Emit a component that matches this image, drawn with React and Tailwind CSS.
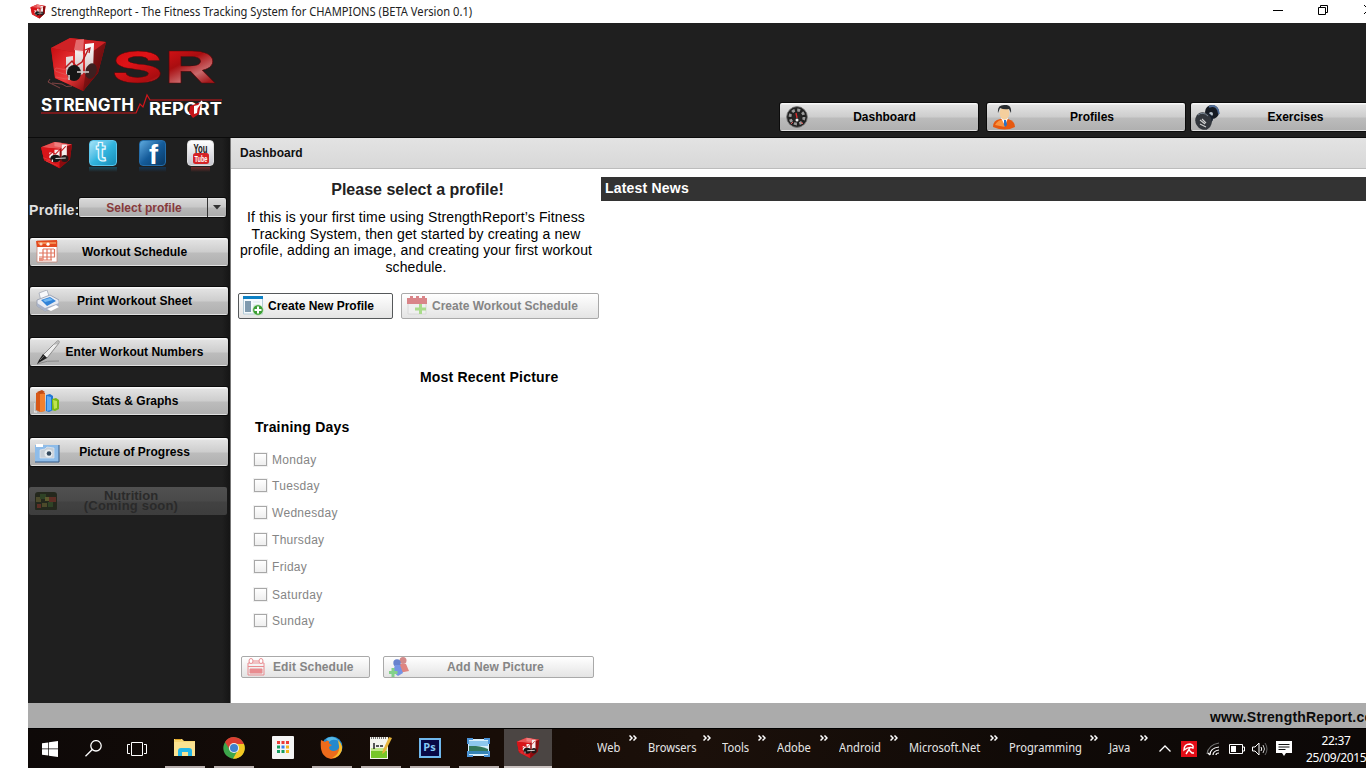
import React from "react";

const glossy =
  "bg-[linear-gradient(180deg,#f8f8f8_0px,#f8f8f8_1px,#e2e2e2_2px,#cdcdcd_14px,#bcbcbc_15px,#b0b0b0_27px,#e0e0e0_27px)] shadow-[0_0_0_1px_#0b0b0b]";

function Cube({ className }) {
  return (
    <svg viewBox="0 0 32 32" preserveAspectRatio="none" className={className}>
      <path d="M1 7 L14 1 L31 4 L29 21 L19 31 L4 22 Z" fill="#c50d12" />
      <path d="M1 7 L14 1 L31 4 L19 9 Z" fill="#e85556" />
      <path d="M1 7 L19 9 L19 31 L4 22 Z" fill="#d91419" />
      <path d="M19 9 L31 4 L29 21 L19 31 Z" fill="#8c0b0e" />
      <path d="M9 13h4v9l-4-3z M14 10h5v13h-5z M21 4h5v14l-5 4z" fill="#f7eeee" />
      <path d="M14 1 L21 2 L20 7 L14 6z" fill="#f49a9a" opacity=".6" />
      <path d="M8 17l4-4 3 2 4-5 2 1 4-5" fill="none" stroke="#c4161b" strokeWidth="1" />
      <ellipse cx="15" cy="20" rx="5" ry="4.3" fill="#151515" />
      <ellipse cx="24" cy="20" rx="3.6" ry="4" fill="#251a1a" />
      <path d="M12 24v-3M15 20l10-.6" stroke="#d8d8d8" strokeWidth="1.3" />
      <path d="M3 19l7 3-4 1 11 5" fill="none" stroke="#ee6768" strokeWidth=".6" opacity=".6" />
    </svg>
  );
}

function Logo() {
  return (
    <svg width="190" height="88" viewBox="38 34 190 88" className="block">
      <defs>
        <linearGradient id="cubeFront" x1="0" y1="0" x2="1" y2="1">
          <stop offset="0" stopColor="#c80c10" /><stop offset=".55" stopColor="#f03c3d" /><stop offset="1" stopColor="#7d0709" />
        </linearGradient>
        <linearGradient id="cubeSide" x1="0" y1="0" x2="1" y2="1">
          <stop offset="0" stopColor="#a01c1e" /><stop offset="1" stopColor="#4f0304" />
        </linearGradient>
        <linearGradient id="bars" x1="0" y1="0" x2="0" y2="1">
          <stop offset="0" stopColor="#fff" /><stop offset="1" stopColor="#c9b4b4" />
        </linearGradient>
        <linearGradient id="sr" x1="0" y1="0" x2="1" y2="1">
          <stop offset="0" stopColor="#c20a0e" /><stop offset=".3" stopColor="#e01317" /><stop offset=".55" stopColor="#a90d10" /><stop offset=".72" stopColor="#c9696b" /><stop offset=".85" stopColor="#a3191c" /><stop offset="1" stopColor="#d31a1e" />
        </linearGradient>
      </defs>
      <path d="M51 48L70 38l36 4-8 31-15 18-28-13z" fill="#b80d11" />
      <path d="M51 48L70 38l36 4-18 13z" fill="#cf2225" />
      <path d="M51 48l37 7-4 36-29-13z" fill="url(#cubeFront)" />
      <path d="M88 55l18-13-8 31-15 18z" fill="url(#cubeSide)" />
      <path d="M66 57l7-1v21l-7-3z M75 50l8 1v23l-8 3z M85 44l9-1-1 28-8 3z" fill="url(#bars)" />
      <path d="M76 40l8-1-1 14-9-3z" fill="#f9b2b2" opacity=".5" />
      <path d="M65 68l7-7 4 5 6-4 7-14" fill="none" stroke="#b41a1e" strokeWidth="1.5" />
      <path d="M85 50l5-2-1 5" fill="none" stroke="#b41a1e" strokeWidth="1.3" />
      <ellipse cx="74" cy="73" rx="7" ry="8" fill="#161616" />
      <ellipse cx="91" cy="71" rx="5.5" ry="8" transform="rotate(18 91 71)" fill="#3c2020" />
      <path d="M69 80v-5M77 72l12 0" stroke="#d8d0d0" strokeWidth="1.6" />
      <path d="M67 70l-11-2q-3 3 2 4l9 3q3 3-1 4l-10-2M52 83l10 1q4 4 10 2M50 79l-2 3 12 6" fill="none" stroke="#e06768" strokeWidth="1" opacity=".5" />
      <text transform="translate(111 83) scale(1.73 1)" fontSize="44" fontWeight="700" fontFamily="Inter, 'Liberation Sans', sans-serif" fill="url(#sr)" stroke="#5d0507" strokeWidth=".4" textLength="61" lengthAdjust="spacingAndGlyphs">SR</text>
      <path d="M41 113h95l4-9 3 3 4-12 3 5h72" fill="none" stroke="#d0161b" strokeWidth="1.2" />
      <g fontFamily="Inter, 'Liberation Sans', sans-serif" fontWeight="700" fill="#fff">
        <text x="41" y="111" fontSize="17" textLength="93" lengthAdjust="spacingAndGlyphs">STRENGTH</text>
        <text x="149" y="115" fontSize="17" textLength="73" lengthAdjust="spacingAndGlyphs">REPORT</text>
      </g>
      <path d="M190 106l11-4-2 12-6 4-4-5z" fill="#c51418" />
      <path d="M194 106l4-1-1 8-3 1z" fill="#fff" />
      <path d="M197 108l5-7" stroke="#fff" strokeWidth="1.5" />
    </svg>
  );
}

const icons = {
  gauge: (
    <svg width="22" height="22" viewBox="0 0 22 22">
      <circle cx="11" cy="11" r="10.4" fill="#202020" stroke="#777" strokeWidth=".8" />
      <circle cx="11" cy="11" r="7" fill="none" stroke="#999" strokeWidth="2.8" strokeDasharray="3 2.5" />
      <circle cx="11" cy="11" r="4.7" fill="#252525" />
      <path d="M10 7l1 5" stroke="#e12c2c" strokeWidth="1.3" />
      <circle cx="11" cy="14" r="1.5" fill="#eee" />
      <path d="M5 18l2-2M17 18l-2-2" stroke="#d55" />
    </svg>
  ),
  user: (
    <svg width="22" height="25" viewBox="0 0 22 25">
      <path d="M0 22q0-7 7-8h8q7 2 7 8-10 5-22 0z" fill="#e65910" />
      <path d="M2 20q3-5 7-5l3 7z" fill="#fa9440" />
      <path d="M8 13h7l-3 8z" fill="#fff" />
      <path d="M11 15h2l1 5-2 2-1-2z" fill="#2773c9" />
      <ellipse cx="11.5" cy="8" rx="4.8" ry="6.7" fill="#f5cf9d" />
      <path d="M5 8Q4 0 11 0q8-1 7 8l-2-4q-5 1-9-1z" fill="#292d30" />
    </svg>
  ),
  dumbbell: (
    <svg width="25" height="25" viewBox="0 0 25 25">
      <circle cx="17" cy="7" r="7" fill="#151a22" />
      <path d="M14 2q6-3 9 3l1 4" fill="none" stroke="#4f6b95" strokeWidth="1.7" />
      <circle cx="16" cy="9" r="2" fill="#b8c2cc" />
      <path d="M12 8q6 1 6 7l-7 10z" fill="#172130" />
      <ellipse cx="8.5" cy="16" rx="8" ry="9" transform="rotate(-28 8.5 16)" fill="#33373d" />
      <path d="M3 10q5-4 10 1" fill="none" stroke="#7a8795" />
      <path d="M5 15l5 4M7 14l4 4M5 19l6 3" stroke="#d0d0d0" strokeWidth="1.1" />
    </svg>
  ),
  calendar: (
    <svg width="22" height="24" viewBox="0 0 22 24">
      <path d="M1 1h20v21H1z" fill="#fff" stroke="#c98878" strokeWidth=".8" />
      <path d="M0 1l21-1v7H1z" fill="#e34a1e" />
      <path d="M2 2h18v2H2z" fill="#f38b52" />
      <circle cx="5" cy="4" r="1.6" fill="#fbd6c0" /><circle cx="12" cy="4.2" r="1.6" fill="#fff" />
      <path d="M7 9h11M3 13h16M3 17h16M3 20h13M7 9v11M11 9v11M15 9v11M18.5 9v8" stroke="#e07660" strokeWidth="1.2" fill="none" />
      <path d="M3 18h4v3H3z" fill="#e7917f" />
    </svg>
  ),
  printer: (
    <svg width="23" height="22" viewBox="0 0 23 22">
      <path d="M3 3l8-3 3 9-9 2z" fill="#f7f8fb" stroke="#a2a8b5" strokeWidth=".8" />
      <path d="M1 10L14 5l9 5v6L9 21l-8-5z" fill="#e8ebf2" stroke="#8f98ab" strokeWidth=".8" />
      <path d="M5 10l9-3 6 4-9 5z" fill="#3183d8" />
      <path d="M7 10l7-2 3 2-8 2z" fill="#73b8f2" />
      <path d="M1 13l8 5 14-5v3L9 21l-8-5z" fill="#a9b3c7" />
      <path d="M11 19l9-4 3 2-8 4z" fill="#fff" />
    </svg>
  ),
  pen: (
    <svg width="25" height="25" viewBox="0 0 25 25">
      <path d="M2 24Q12 20 24 21" fill="none" stroke="#888" strokeWidth="1" />
      <path d="M8 15L22 1q3-1 2 2L12 18z" fill="#eee" stroke="#777" strokeWidth=".8" />
      <path d="M18 5l4-4q3 0 1 3z" fill="#bababa" />
      <path d="M8 14l4 4-7 4-3 2 2-4z" fill="#202020" />
      <path d="M5 20l4-4" stroke="#666" />
    </svg>
  ),
  bars: (
    <svg width="25" height="23" viewBox="0 0 25 23">
      <path d="M0 13v9h3" fill="none" stroke="#f3f3f3" />
      <path d="M2 3l5-2 4 2v18l-5 1-4-2z" fill="#d75818" /><path d="M6 4h5v17l-5 1z" fill="#f3812e" /><path d="M3 2l5-2 3 2-5 2z" fill="#c14d15" />
      <path d="M12 5l4-1 3 2v14l-4 2-3-1z" fill="#2177d4" /><path d="M13 6l4 1v13l-4 1z" fill="#60acf5" />
      <path d="M18 9l4-1 3 2v9l-4 2-3-1z" fill="#7ab814" /><path d="M19 10l4 1v7l-3 1z" fill="#bfe34e" />
    </svg>
  ),
  camera: (
    <svg width="25" height="20" viewBox="0 0 25 20">
      <path d="M0 2h24v17H0z" fill="#8ebce9" /><path d="M24 2v17H0" fill="none" stroke="#345b86" strokeWidth="1" />
      <path d="M1 1h7v3H1z" fill="#fff" />
      <path d="M5 7l5-1 2-2 7 1v10H5z" fill="#c6ced6" stroke="#e9edf1" strokeWidth=".6" />
      <circle cx="13.5" cy="10.5" r="4" fill="#e8edf0" /><circle cx="14" cy="10.5" r="2.3" fill="#34495d" />
    </svg>
  ),
  food: (
    <svg width="22" height="19" viewBox="0 0 22 19">
      <rect width="22" height="19" y="1" rx="3" fill="#24281d" />
      <path d="M1 6h5v5H1zM7 12h5v4H7z" fill="#4c4a2b" /><path d="M5 3h6v5H5zM13 11h5v5h-5z" fill="#2f4326" />
      <path d="M14 6h7v5h-7zM2 13h4v4H2z" fill="#5c2e25" /><path d="M10 6h4v4h-4z" fill="#5e592e" />
    </svg>
  ),
};

function GlossyButton({ icon, label, iconClass, textClass, className = "" }) {
  return (
    <div className={`${glossy} relative flex h-7 w-[198px] shrink-0 items-center justify-center rounded-[2px] ${className}`}>
      <span className={`absolute ${iconClass}`}>{icons[icon]}</span>
      <span className={`whitespace-nowrap text-[12px] leading-[14px] font-bold text-black ${textClass}`}>{label}</span>
    </div>
  );
}

function Sidebar() {
  return (
    <aside className="flex w-[202px] shrink-0 flex-col bg-[linear-gradient(90deg,#1f1f1f_0,#1f1f1f_194px,#151515_202px)]">
      <div className="mt-[2px] flex h-9 items-start pl-3">
        <Cube className="mt-px h-7 w-[33px]" />
        <div className="ml-4 flex flex-col">
          <div className="flex h-[26px] w-7 items-center justify-center rounded-[4px] border border-[#5bc6ec] bg-linear-to-br from-[#a3e4f8] via-[#32b5df] to-[#158db8]">
            <svg width="22" height="24" viewBox="0 0 22 24"><text x="4" y="20" fontSize="27" fontWeight="700" fontFamily="Inter, sans-serif" fill="#45bfe5" stroke="#eefaff" strokeWidth="1.2">t</text></svg>
          </div>
          <div className="mt-px h-[5px] bg-linear-to-b from-[#12495c] to-[#1f1f1f]" />
        </div>
        <div className="ml-[22px] flex flex-col">
          <div className="flex h-[26px] w-[27px] items-center justify-end overflow-hidden rounded-[4px] border border-[#256da9] bg-linear-to-br from-[#5daade] via-[#145c9b] to-[#083966] pr-0.5">
            <svg width="14" height="26" viewBox="0 0 14 26"><text x="0" y="24" fontSize="27" fontWeight="700" fontFamily="'Liberation Sans', sans-serif" fill="#fff">f</text></svg>
          </div>
          <div className="mt-px h-[5px] bg-linear-to-b from-[#103454] to-[#1f1f1f]" />
        </div>
        <div className="ml-[21px] flex flex-col">
          <div className="h-[26px] w-[27px] rounded-[4px] border border-[#ddd] bg-linear-to-b from-white to-[#c6c6cf]">
            <svg width="25" height="24" viewBox="0 0 25 24" className="block">
              <text x="5.5" y="11.5" fontSize="12" fontWeight="700" fontFamily="'Liberation Sans', sans-serif" fill="#171717" textLength="14" lengthAdjust="spacingAndGlyphs">You</text>
              <rect x="5" y="12" width="16" height="11" rx="2.5" fill="#d62226" />
              <text x="6.5" y="21" fontSize="9" fontWeight="700" fontFamily="'Liberation Sans', sans-serif" fill="#fff" textLength="13" lengthAdjust="spacingAndGlyphs">Tube</text>
            </svg>
          </div>
          <div className="mx-1 mt-px h-[5px] bg-linear-to-b from-[#70292b] to-[#1f1f1f]" />
        </div>
      </div>
      <div className="mt-[22px] flex h-[19px]">
        <span className="w-[51px] pl-px pt-[3px] text-[14px] leading-[18px] font-bold tracking-[0.3px] text-[#e0e0e0]">Profile:</span>
        <div className="flex h-[19px] w-[147px] rounded-[2px] bg-[linear-gradient(180deg,#f4f4f4_0px,#d8d8d8_1px,#c8c8c8_9px,#b7b7b7_10px,#acacac_18px,#ddd_18px)] shadow-[0_0_0_1px_#0b0b0b]">
          <span className="w-[129px] border-r border-[#333] pl-0.5 pt-[3px] text-center text-[12px] leading-[14px] font-bold text-[#873a3c]">Select profile</span>
          <span className="flex flex-1 items-center justify-center"><svg width="8" height="5" viewBox="0 0 8 5"><path d="M0 0h8L4 4.5z" fill="#333" /></svg></span>
        </div>
      </div>
      <div className="flex flex-col pl-[2px] pt-[21px]">
        <GlossyButton icon="calendar" label="Workout Schedule" iconClass="left-[6px] top-[2px]" textClass="pl-[11px]" />
        <GlossyButton icon="printer" label="Print Workout Sheet" iconClass="left-[6px] top-[3px]" textClass="pl-[11px]" className="mt-[21px]" />
        <GlossyButton icon="pen" label="Enter Workout Numbers" iconClass="left-[5px] top-[2px]" textClass="pl-[11px]" className="mt-[23px]" />
        <GlossyButton icon="bars" label="Stats & Graphs" iconClass="left-[4px] top-[3px]" textClass="pl-[12px]" className="mt-[21px]" />
        <GlossyButton icon="camera" label="Picture of Progress" iconClass="left-[5px] top-[5px]" textClass="pl-[11px]" className="mt-[23px]" />
        <div className="relative -ml-px mt-[21px] flex h-7 w-[198px] flex-col items-center justify-center rounded-[2px] bg-[linear-gradient(180deg,#505050,#494949_14px,#424242_15px,#3d3d3d)] pl-[6px] text-[13px] leading-[10px] font-bold text-[#2a2a2a]">
          <span className="absolute left-[6px] top-[4px]">{icons.food}</span>
          <span>Nutrition</span>
          <span className="tracking-[0.2px]">(Coming soon)</span>
        </div>
      </div>
    </aside>
  );
}

function FlatButton({ children, label, disabled, className, textClass }) {
  return (
    <div className={`flex shrink-0 items-center rounded-[2px] border bg-linear-to-b from-white to-[#e4e4e4] ${disabled ? "border-[#a9a9a9]" : "border-[#55585a]"} ${className}`}>
      {children}
      <span className={`whitespace-nowrap text-[12px] leading-[14px] font-bold ${disabled ? "text-[#858585]" : "text-black"} ${textClass}`}>{label}</span>
    </div>
  );
}

const days = [
  ["Monday", "h-[26px]"],
  ["Tuesday", "h-[27px]"],
  ["Wednesday", "h-[27px]"],
  ["Thursday", "h-[27px]"],
  ["Friday", "h-[28px]"],
  ["Saturday", "h-[26px]"],
  ["Sunday", "h-[26px]"],
];

function Dashboard() {
  return (
    <section className="flex w-[370px] shrink-0 flex-col">
      <h1 className="mt-[12px] pl-[3px] text-center text-[16px] leading-[18px] font-bold text-[#222]">Please select a profile!</h1>
      <p className="mt-[10px] whitespace-nowrap text-center text-[14px] leading-[16.6px] tracking-[0.13px] text-black">
        If this is your first time using StrengthReport’s Fitness<br />
        Tracking System, then get started by creating a new<br />
        profile, adding an image, and creating your first workout<br />
        schedule.
      </p>
      <div className="mt-[18px] flex gap-2 pl-[7px]">
        <FlatButton label="Create New Profile" className="h-[26px] w-[155px] pl-1" textClass="ml-[4px]">
          <svg width="21" height="20" viewBox="0 0 21 20">
            <path d="M.5 1h19v17H.5z" fill="#f5fafd" stroke="#b4ccd8" /><path d="M0 0h20v3H0z" fill="#0d80c4" />
            <path d="M2 5h6v11H2z" fill="#7f9aae" /><path d="M10 6h7M10 9h7" stroke="#dce7ed" />
            <circle cx="15" cy="14" r="5.3" fill="#3c9e36" stroke="#d9f0d1" strokeWidth=".7" /><path d="M15 10.5v7M11.5 14h7" stroke="#fff" strokeWidth="2" />
          </svg>
        </FlatButton>
        <FlatButton disabled label="Create Workout Schedule" className="h-[26px] w-[198px] pl-[5px]" textClass="ml-[4px]">
          <svg width="21" height="20" viewBox="0 0 21 20">
            <path d="M1 3h18v15H1z" fill="#efefef" stroke="#d8d8d8" /><path d="M0 2h3V0h3v2h3V0h3v2h3V0h3v2h2v6H0z" fill="#d98589" />
            <path d="M13.5 8v10M8 13h11" stroke="#a9db8b" strokeWidth="3" />
          </svg>
        </FlatButton>
      </div>
      <h2 className="mt-[50px] pl-[189px] text-[14px] leading-4 font-bold tracking-[0.2px] text-black">Most Recent Picture</h2>
      <h2 className="mt-[34px] pl-[24px] text-[14px] leading-4 font-bold tracking-[0.2px] text-black">Training Days</h2>
      <div className="mt-[18px] flex flex-col pl-[23px]">
        {days.map(([day, height]) => (
          <div key={day} className={`flex items-start ${height}`}>
            <span className="size-[13px] border border-[#a8a8a8] bg-linear-to-b from-white to-[#eee] shadow-[0_0_0_1px_#f1f1f1]" />
            <span className="ml-[5px] text-[12px] leading-[14px] tracking-[0.3px] text-[#858585]">{day}</span>
          </div>
        ))}
      </div>
      <div className="mt-[16px] flex gap-[13px] pl-[10px]">
        <FlatButton disabled label="Edit Schedule" className="h-[22px] w-[129px] pl-[5px]" textClass="ml-[8px] tracking-[0.1px]">
          <svg width="18" height="18" viewBox="0 0 18 18" fill="none" stroke="#e98c90">
            <path d="M1 5h16v12H1zM1 8.5h16" /><path d="M3 11h12v4H3z" fill="#e98c90" /><ellipse cx="4" cy="3" rx="2" ry="2.5" fill="#fff" /><ellipse cx="14" cy="3" rx="2" ry="2.5" fill="#fff" /><path d="M6 3h6" />
          </svg>
        </FlatButton>
        <FlatButton disabled label="Add New Picture" className="h-[22px] w-[211px] pl-[4px]" textClass="ml-[38px] tracking-[0.1px]">
          <svg width="21" height="20" viewBox="0 0 21 20">
            <circle cx="15" cy="3.5" r="3.5" fill="#d38a89" /><path d="M12 7h6l3 7-10 2z" fill="#df8580" />
            <circle cx="9" cy="6" r="3.7" fill="#6782ce" /><path d="M7 8h5l3 8-5 3-5-4z" fill="#7594e5" /><path d="M5 11v9M1 15.5h8.5" stroke="#83d18a" strokeWidth="3" />
          </svg>
        </FlatButton>
      </div>
    </section>
  );
}

const toolbars = [
  ["Web", "w-[51px]"],
  ["Browsers", "w-[74px]"],
  ["Tools", "w-[55px]"],
  ["Adobe", "w-[62px]"],
  ["Android", "w-[70px]"],
  ["Microsoft.Net", "w-[100px]"],
  ["Programming", "w-[100px]"],
  ["Java", "w-[50px]"],
];

const apps = [
  ["explorer", true, <svg width="22" height="20" viewBox="0 0 22 20"><path d="M0 1h8l2 2h11v15H0z" fill="#f7d774" /><path d="M0 4h21v14H0z" fill="#fbe391" /><path d="M1 1h6v1H1z" fill="#e0a526" /><path d="M4 18v-5q0-3 3-3h8q3 0 3 3v5h-4v-4H8v4z" fill="#24b7e8" /></svg>],
  ["chrome", true, <svg width="22" height="22" viewBox="0 0 22 22"><circle cx="11" cy="11" r="10.7" fill="#3da64b" /><path d="M2 5A10.7 10.7 0 0 1 21 7H11L7 13z" fill="#db3e32" /><path d="M21 7A10.7 10.7 0 0 1 10 21.7l5-9L11 7z" fill="#f4c723" /><circle cx="11" cy="11" r="5.1" fill="#eee" /><circle cx="11" cy="11" r="4" fill="#3f82cf" /></svg>],
  ["launcher", false, <svg width="22" height="23" viewBox="0 0 22 23"><rect width="22" height="23" rx="1" fill="#f5f5f5" /><path d="M5 5h3v3H5zM9.5 5h3v3h-3zM14 5h3v3h-3z" fill="#ed3b36" /><path d="M5 9.5h3v3H5zM5 14h3v3H5zM9.5 14h3v3h-3z" fill="#169e61" /><path d="M9.5 9.5h3v3h-3z" fill="#3a80ed" /><path d="M14 9.5h3v3h-3zM14 14h3v3h-3z" fill="#f4b61b" /></svg>],
  ["firefox", true, <svg width="23" height="23" viewBox="0 0 23 23"><circle cx="12" cy="11" r="10.5" fill="#2389cd" /><path d="M6 3q7-5 13 2-7-3-10 1z" fill="#55b8e6" /><path d="M1 4l4 2q2-2 4-1-1 3 3 4l-3 2q0 4 5 4 6-1 6-8l2 4q-1 11-11 12Q-1 21 1 4z" fill="#ed6b1b" /><path d="M18 4q7 7 2 14-3 4-8 4 8-4 7-12z" fill="#f9bd2c" /></svg>],
  ["notepad", true, <svg width="23" height="24" viewBox="0 0 23 24"><path d="M1 1h18v22H1z" fill="#f4f4ed" /><path d="M2 14h16v8H2z" fill="#77c629" /><path d="M2 12h16v3H2z" fill="#c2e889" /><path d="M2 2h16" stroke="#777" strokeDasharray="1 1" strokeWidth="2" /><path d="M5 7v6M7 10h3M11 10h3" stroke="#222" strokeWidth="1.5" /><path d="M20 1l3 1-7 14-3 2 1-4z" fill="#e6b43b" /></svg>],
  ["photoshop", true, <div className="flex h-5 w-[22px] items-center justify-center border-2 border-[#70b8ed] bg-[#080845] text-[11px] font-bold text-[#86c8f5] [font-family:'Open_Sans',sans-serif]">Ps</div>],
  ["pictures", true, <svg width="23" height="19" viewBox="0 0 23 19"><path d="M1 1h21v17H1z" fill="#d9f0fc" /><path d="M2 8q8-1 19 3v3H2z" fill="#34785b" /><path d="M2 3h19v5H2z" fill="#8dc8ee" /><path d="M2 13h19v3H2z" fill="#3684b5" /><path d="M1 6V1h5M17 1h5v5M1 13v5h5M17 18h5v-5" fill="none" stroke="#4b93d6" strokeWidth="2" /></svg>],
];

function Taskbar() {
  return (
    <div className="flex h-10 w-[1338px] shrink-0 overflow-hidden border-t border-black bg-[linear-gradient(90deg,#0e0908,#180d07_35%,#1b100a_50%,#100a07_75%,#0c0807)] text-[12px] text-[#e6e6e6] [font-family:'Noto_Sans','Open_Sans',sans-serif]">
      <div className="flex w-12 items-center justify-center"><svg width="16" height="16" viewBox="0 0 16 16" fill="#fff"><path d="M0 2.3l6.3-.9v6.2H0zM7 1.2L16 0v7.6H7zM0 8.3h6.3v6.2L0 13.7zM7 8.3h9V16l-9-1.3z" /></svg></div>
      <div className="flex w-12 items-center justify-center"><svg width="17" height="17" viewBox="0 0 17 17" fill="none" stroke="#fff" strokeWidth="1.3"><circle cx="11" cy="5.8" r="5.2" /><path d="M7.3 9.5L.5 16.3" /></svg></div>
      <div className="flex w-12 items-center justify-center"><svg width="20" height="14" viewBox="0 0 20 14" fill="none" stroke="#fff"><path d="M4.500.5h11v13h-11zM3 2.500H.5v9H3M17 2.500h2.500v9H17" /></svg></div>
      <div className="ml-[1px] flex">
        {apps.map(([name, open, icon]) => (
          <div key={name} className="flex w-[49px] flex-col items-center">
            <div className="flex h-[37px] items-center">{icon}</div>
            {open && <div className="h-[2px] w-10 bg-[#b9b0ae]" />}
          </div>
        ))}
        <div className="ml-px flex w-12 flex-col items-center bg-[#4b4543]">
          <div className="flex h-[37px] items-center"><Cube className="h-[22px] w-6" /></div>
          <div className="h-[2px] w-12 bg-[#cac2c0]" />
        </div>
      </div>
      <div className="ml-[45px] flex">
        {toolbars.map(([name, width]) => (
          <div key={name} className={`flex shrink-0 justify-between pr-[11px] ${width}`}>
            <span className="origin-left scale-x-[0.93] pt-[11px] leading-4 whitespace-nowrap">{name}</span>
            <svg width="8" height="6" viewBox="0 0 8 6" className="-ml-4 mt-[6px] shrink-0" fill="none" stroke="#fff" strokeWidth="1.5"><path d="M.5.5L3 3 .5 5.500M4.500.5L7 3 4.500 5.500" /></svg>
          </div>
        ))}
      </div>
      <div className="flex shrink-0 items-center">
        <svg width="12" height="7" viewBox="0 0 12 7" fill="none" stroke="#fff" strokeWidth="1.3"><path d="M.5 6.500L6 1l5.500 5.500" /></svg>
        <svg width="16" height="16" viewBox="0 0 16 16" className="ml-[10px]"><path d="M0 0h16v16H0z" fill="#e30d17" /><path d="M3 9Q3 3 9 3q4 1 3 4-4-2-9 2zM9 7l-4 6M8 9l3 3h2" fill="none" stroke="#fff" strokeWidth="1.4" /></svg>
        <svg width="14" height="14" viewBox="0 0 14 14" className="ml-[9px]" fill="none" strokeWidth="1.2"><path d="M1 12Q2 3 13 1" stroke="#777" /><path d="M4 13q0-7 9-8M7 13q0-4 6-5M10 13q0-2 3-2M2 11l2 2" stroke="#fff" /></svg>
        <svg width="16" height="10" viewBox="0 0 16 10" className="ml-[9px]"><path d="M.5.5h13v9H.5zM14 3h1.500v4H14" fill="none" stroke="#fff" /><path d="M2 2h5v6H2z" fill="#fff" /></svg>
        <svg width="16" height="14" viewBox="0 0 16 14" className="ml-[7px]" fill="none" stroke="#fff"><path d="M.5 5H3l4-4v12L3 9H.5zM9 5q1.500 2 0 4" /><path d="M11 3q3 4 0 8" stroke="#ccc" /><path d="M13 1q4 6 0 12" stroke="#666" /></svg>
        <svg width="16" height="16" viewBox="0 0 16 16" className="ml-[8px]"><path d="M0 0h16v12h-6l-2 3-2-3H0z" fill="#fff" /><path d="M2.500 3.500h11M2.500 6h11M2.500 8.500h7" stroke="#111" /></svg>
        <div className="ml-[14px] w-[60px] text-center text-[12px] leading-[17px] tracking-[-0.35px] text-white"><div>22:37</div><div>25/09/2015</div></div>
      </div>
    </div>
  );
}

export default function App() {
  return (
    <main className="flex h-[768px] w-[1366px] flex-col overflow-hidden bg-white pl-7 [font-family:'Liberation_Sans',Arial,sans-serif]">
      <header className="flex h-[23px] shrink-0 items-center overflow-hidden text-[12px] text-[#222] [font-family:'Noto_Sans','Open_Sans',sans-serif]">
        <Cube className="ml-[2px] h-[15px] w-4 shrink-0" />
        <span className="ml-[5px] w-[427px] origin-left scale-x-[0.93] leading-[22px] whitespace-nowrap">StrengthReport - The Fitness Tracking System for CHAMPIONS (BETA Version 0.1)</span>
        <svg width="94" height="12" viewBox="0 0 94 12" className="mb-[3px] ml-auto shrink-0" fill="none" stroke="#000"><path d="M1 6.500h10M46.500 3.500h7v7h-7zM48.500 3.500v-2h7v7h-2M92 1l9 9M92 10l9-9" /></svg>
      </header>
      <div className="flex h-[115px] w-[1338px] shrink-0 overflow-hidden border-b border-[#0b0b0b] bg-[#1f1f1f]">
        <div className="w-[752px] shrink-0 pl-[10px] pt-[11px]"><Logo /></div>
        <nav className="flex pt-[80px]">
          <GlossyButton icon="gauge" label="Dashboard" iconClass="left-[6px] top-[3px]" textClass="pl-[11px]" />
          <GlossyButton icon="user" label="Profiles" iconClass="left-[6px] top-[2px]" textClass="pl-[12px]" className="ml-[9px]" />
          <GlossyButton icon="dumbbell" label="Exercises" iconClass="left-[4px] top-[2px]" textClass="pl-[11px]" className="ml-[6px]" />
        </nav>
      </div>
      <div className="flex h-[565px] shrink-0">
        <Sidebar />
        <div className="flex min-w-0 flex-1 flex-col border-l border-[#777] bg-white">
          <div className="h-[31px] shrink-0 border-b border-[#bcbcbc] bg-linear-to-b from-[#e3e3e3] to-[#d8d8d8] pl-[9px] pt-[8px] text-[12px] leading-[14px] font-bold text-[#111]">Dashboard</div>
          <div className="flex flex-1">
            <Dashboard />
            <section className="mt-[8px] flex-1">
              <h2 className="h-6 bg-[#333] pl-1 pt-[3px] text-[14px] leading-4 font-bold tracking-[0.2px] text-white">Latest News</h2>
            </section>
          </div>
        </div>
      </div>
      <footer className="h-[25px] w-[1338px] shrink-0 overflow-hidden bg-[#ababab] pl-[1182px] pt-[6px] text-[14px] leading-4 font-bold tracking-[0.2px] whitespace-nowrap text-[#0a0a0a]">www.StrengthReport.com</footer>
      <Taskbar />
    </main>
  );
}
